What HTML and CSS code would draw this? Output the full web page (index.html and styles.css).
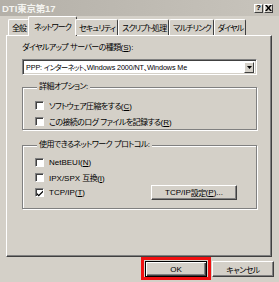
FILE: index.html
```html
<!DOCTYPE html>
<html lang="ja">
<head>
<meta charset="utf-8">
<link rel="stylesheet" href="styles.css">
</head>
<body>
<div class="window">
  <div class="titlebar">
    <span class="title">DTI<span class="tj">東京第</span>17</span>
    <div class="capbtns">
      <span class="capbtn">?</span>
      <span class="capbtn">
        <svg width="7" height="6" viewBox="0 0 7 6"><path d="M0 0h2l1.5 2L5 0h2L4.5 3 7 6H5L3.5 4 2 6H0l2.5-3z" fill="#000"/></svg>
      </span>
    </div>
  </div>
  <div class="tabs">
    <span class="tab">全般</span>
    <span class="tab active">ネットワーク</span>
    <span class="tab">セキュリティ</span>
    <span class="tab">スクリプト処理</span>
    <span class="tab">マルチリンク</span>
    <span class="tab">ダイヤル</span>
  </div>
  <div class="panel">
    <div class="label"><span class="j">ダイヤルアップ</span> <span class="j">サーバーの種類</span>(<u>S</u>):</div>
    <div class="combo">
      <span class="combo-text">PPP: <span class="j">インターネット、</span>Windows 2000/NT<span class="j">、</span>Windows Me</span>
      <span class="drop"><svg width="5" height="3" viewBox="0 0 5 3"><path d="M0 0h5L2.5 3z" fill="#000"/></svg></span>
    </div>
    <fieldset class="group g1">
      <legend><span class="j">詳細オプション</span>:</legend>
      <div class="row"><span class="check"></span><span><span class="j">ソフトウェア圧縮をする</span>(<u>C</u>)</span></div>
      <div class="row"><span class="check"></span><span><span class="j">この接続のログ</span> <span class="j">ファイルを記録する</span>(<u>R</u>)</span></div>
    </fieldset>
    <fieldset class="group g2">
      <legend><span class="j">使用できるネットワーク</span> <span class="j">プロトコル</span>:</legend>
      <div class="row r2"><span class="check"></span><span>NetBEUI(<u>N</u>)</span></div>
      <div class="row r2"><span class="check"></span><span>IPX/SPX <span class="j">互換</span>(<u>I</u>)</span></div>
      <div class="row r2">
        <span class="check"><svg width="7" height="7" viewBox="0 0 7 7"><path d="M0 3l2 2 5-5v2L2 7 0 5z" fill="#000"/></svg></span>
        <span>TCP/IP(<u>T</u>)</span>
        <span class="btn settings">TCP/IP <span class="j">設定</span>(<u>P</u>)...</span>
      </div>
    </fieldset>
  </div>
  <div class="footer">
    <span class="btn default">OK</span>
    <span class="btn"><span class="j">キャンセル</span></span>
  </div>
  <div class="highlight"></div>
</div>
</body>
</html>
```
FILE: styles.css
```css
* { box-sizing: border-box; }
body {
  margin: 0;
  background: #d4d0c8;
  font-family: "Liberation Sans", "Noto Sans CJK JP", sans-serif;
  font-size: 8px;
  font-feature-settings: "palt";
  color: #000;
}
.j { letter-spacing: -0.6px; }
u { text-decoration: underline; text-underline-offset: 1px; }
.window {
  position: relative;
  width: 279px;
  height: 282px;
  background: #d4d0c8;
  display: flex;
  flex-direction: column;
  overflow: hidden;
}
.titlebar {
  height: 16px;
  background: linear-gradient(to right, #b4b0a8, #c8c4bc);
  display: flex;
  align-items: center;
  justify-content: space-between;
  padding: 0 6px 0 2px;
}
.title {
  color: #f4f4f0;
  font-size: 9.5px;
  font-weight: bold;
}
.tj { letter-spacing: -0.3px; }
.capbtns { display: flex; gap: 1px; }
.capbtn {
  width: 9px;
  height: 9px;
  background: #d4d0c8;
  border: 1px solid;
  border-color: #fff #404040 #404040 #fff;
  display: flex;
  align-items: center;
  justify-content: center;
  font-size: 8px;
  font-weight: bold;
  line-height: 1;
}
.tabs {
  display: flex;
  align-items: flex-end;
  height: 19px;
  margin: 0 0 0 8px;
  position: relative;
  z-index: 1;
}
.tab {
  height: 16px;
  padding: 0 2px 0 3px;
  border: 1px solid;
  border-color: #fff #404040 transparent #fff;
  border-bottom: none;
  border-radius: 2px 2px 0 0;
  display: flex;
  align-items: center;
  white-space: nowrap;
  background: #d4d0c8;
  letter-spacing: -0.9px;
}
.tab.active {
  margin: 0 -2px -1px -1px;
  padding: 0 5px 1px;
  height: 20px;
}
.panel {
  height: 222px;
  margin: 0 7px 0 6px;
  border: 1px solid;
  border-color: #fff #404040 #404040 #fff;
  box-shadow: inset -1px -1px 0 #808080;
  padding: 7px 14px 0 15px;
}
.label {
  height: 10px;
  line-height: 10px;
  white-space: nowrap;
}
.combo {
  margin-top: 6px;
  height: 16px;
  background: #fff;
  border: 1px solid;
  border-color: #808080 #fff #fff #808080;
  box-shadow: inset 1px 1px 0 #404040, inset -1px -1px 0 #d4d0c8;
  display: flex;
  align-items: center;
  padding: 0 2px 0 3px;
}
.combo-text { flex: 1; white-space: nowrap; font-size: 7.2px; letter-spacing: -0.1px; }
.combo-text .j { letter-spacing: -0.6px; }
.drop {
  width: 10px;
  height: 11px;
  background: #d4d0c8;
  border: 1px solid;
  border-color: #fff #404040 #404040 #fff;
  display: flex;
  align-items: center;
  justify-content: center;
}
.group {
  margin: 0;
  border: 1px solid #808080;
  box-shadow: 1px 1px 0 #fff, inset 1px 1px 0 #fff;
  padding: 5px 0 0 12px;
  min-width: 0;
}
.group legend {
  padding: 0 2px;
  margin-left: 2px;
  line-height: 10px;
  height: 10px;
  background: #d4d0c8;
  white-space: nowrap;
}
.g1 { margin-top: 7px; padding-bottom: 0; }
.g2 { margin-top: 10px; padding-bottom: 8px; }
.row {
  height: 16px;
  display: flex;
  align-items: center;
  white-space: nowrap;
}
.r2 { height: 15px; }
.check {
  width: 9px;
  height: 9px;
  background: #fff;
  border: 1px solid;
  border-color: #808080 #fff #fff #808080;
  box-shadow: inset 1px 1px 0 #404040;
  margin-right: 5px;
  display: flex;
  align-items: center;
  justify-content: center;
  flex: none;
}
.check svg { margin: 1px 0 0 1px; }
.btn {
  height: 15px;
  border: 1px solid;
  border-color: #fff #404040 #404040 #fff;
  box-shadow: inset -1px -1px 0 #808080;
  background: #d4d0c8;
  display: flex;
  align-items: center;
  justify-content: center;
  white-space: nowrap;
}
.settings {
  width: 86px;
  margin-left: auto;
  margin-right: 19px;
}
.footer {
  display: flex;
  justify-content: flex-end;
  gap: 5px;
  padding: 4px 5px 0 0;
}
.footer .btn { width: 62px; height: 16px; }
.footer .btn.default {
  border: 1px solid #000;
  box-shadow: inset 1px 1px 0 #fff, inset -1px -1px 0 #404040, inset -2px -2px 0 #808080;
}
.highlight {
  position: absolute;
  left: 141px;
  top: 257px;
  width: 70px;
  height: 23px;
  border: 3px solid #f01010;
}
```
